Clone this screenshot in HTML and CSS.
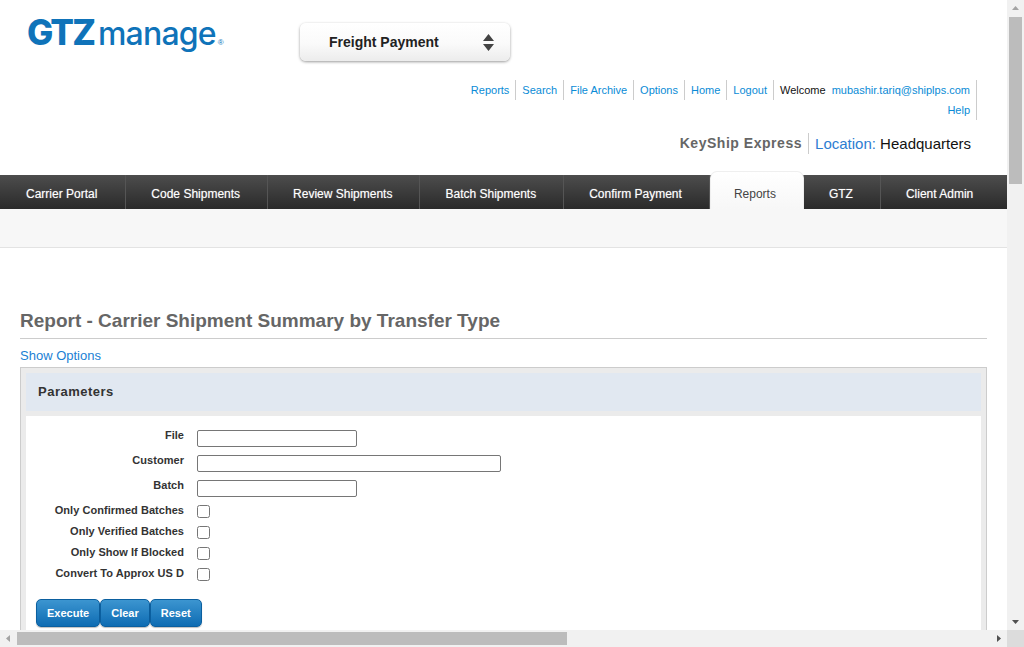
FILE: index.html
```html
<!DOCTYPE html>
<html>
<head>
	<meta charset="UTF-8">
	<title>Report - Carrier Shipment Summary by Transfer Type</title>
	<link rel="stylesheet" href="styles.css">
</head>
<body>
	<div class="window">
		<div class="viewport">
			<div class="page">
				<div class="header">
					<div class="brand-row">
						<a class="logo" href="#"><span class="logo-gtz">GTZ</span><span class="logo-manage">manage</span><span class="logo-reg">®</span></a>
						<a class="app-select" href="#">
							<span>Freight Payment</span>
							<svg class="updown" width="11" height="17" viewBox="0 0 11 17"><path d="M5.500 0 11 7H0zM0 10h11l-5.500 7z" fill="#444"/></svg>
						</a>
					</div>
					<ul class="toplinks">
						<li><a href="#">Reports</a></li>
						<li><a href="#">Search</a></li>
						<li><a href="#">File Archive</a></li>
						<li><a href="#">Options</a></li>
						<li><a href="#">Home</a></li>
						<li><a href="#">Logout</a></li>
						<li><span class="welcome">Welcome</span><a href="#">mubashir.tariq@shiplps.com</a></li>
						<li><a href="#">Help</a></li>
					</ul>
					<div class="company">
						<span class="company-name">KeyShip Express</span>
						<span class="location"><a href="#">Location:</a> <span class="location-name">Headquarters</span></span>
					</div>
				</div>

				<ul class="nav">
					<li><a href="#">Carrier Portal</a></li>
					<li><a href="#">Code Shipments</a></li>
					<li><a href="#">Review Shipments</a></li>
					<li><a href="#">Batch Shipments</a></li>
					<li><a href="#">Confirm Payment</a></li>
					<li class="active"><a href="#">Reports</a></li>
					<li><a href="#">GTZ</a></li>
					<li><a href="#">Client Admin</a></li>
				</ul>
				<div class="subnav"></div>

				<div class="content">
					<h1>Report - Carrier Shipment Summary by Transfer Type</h1>
					<a class="show-options" href="#">Show Options</a>
					<div class="panel">
						<div class="panel-title">Parameters</div>
						<div class="panel-body">
							<div class="form">
								<label>File</label><input class="short" type="text">
								<label>Customer</label><input class="long" type="text">
								<label>Batch</label><input class="short" type="text">
								<label>Only Confirmed Batches</label><input type="checkbox">
								<label>Only Verified Batches</label><input type="checkbox">
								<label>Only Show If Blocked</label><input type="checkbox">
								<label>Convert To Approx US D</label><input type="checkbox">
							</div>
							<div class="buttons">
								<a class="btn" href="#">Execute</a><a class="btn" href="#">Clear</a><a class="btn" href="#">Reset</a>
							</div>
						</div>
					</div>
				</div>
			</div>
			<div class="vbar">
				<svg class="arrow" width="17" height="17" viewBox="0 0 17 17"><path d="M8.500 6 12 10H5z" fill="#a3a3a3"/></svg>
				<div class="vthumb"></div>
				<svg class="arrow arrow-end" width="17" height="17" viewBox="0 0 17 17"><path d="M5 7h7l-3.500 4z" fill="#505050"/></svg>
			</div>
		</div>
		<div class="hbar">
			<svg class="arrow" width="17" height="17" viewBox="0 0 17 17"><path d="M6 8.500 10 5v7z" fill="#a3a3a3"/></svg>
			<div class="hthumb"></div>
			<svg class="arrow arrow-end" width="17" height="17" viewBox="0 0 17 17"><path d="M7 5l4 3.500L7 12z" fill="#505050"/></svg>
			<div class="corner"></div>
		</div>
	</div>
</body>
</html>
```

FILE: styles.css
```css
html, body {
	margin: 0;
	padding: 0;
	background: #fff;
	overflow: hidden;
}
body {
	font-family: "Liberation Sans", Arial, sans-serif;
	font-size: 12px;
	color: #333;
}
a {
	text-decoration: none;
}
ul {
	margin: 0;
	padding: 0;
	list-style: none;
}

.window {
	display: flex;
	flex-direction: column;
	width: 1024px;
	height: 647px;
	overflow: hidden;
}
.viewport {
	display: flex;
	height: 630px;
}
.page {
	width: 1007px;
	overflow: hidden;
}

/* header */
.header {
	height: 175px;
	overflow: hidden;
}
.brand-row {
	display: flex;
	height: 80px;
}
.logo {
	display: flex;
	align-items: baseline;
	width: 273px;
	height: 50px;
	margin: 10px 0 0 27px;
	color: #0f73b9;
}
.logo-gtz {
	font-family: Inter, sans-serif;
	font-size: 35px;
	font-weight: 800;
	letter-spacing: -1.900px;
	line-height: 45px;
}
.logo-manage {
	margin-left: 4px;
	font-family: Inter, sans-serif;
	font-size: 32px;
	font-weight: 500;
	letter-spacing: -0.800px;
}
.logo-reg {
	margin-left: 2px;
	font-size: 8px;
}
.app-select {
	display: flex;
	align-items: center;
	justify-content: space-between;
	box-sizing: border-box;
	width: 210px;
	height: 38px;
	margin-top: 23px;
	padding: 0 16px 0 29px;
	border-radius: 6px;
	background: linear-gradient(#fff, #fafafa 55%, #ececec);
	box-shadow: 0 1px 3px rgba(0, 0, 0, 0.4);
	color: #222;
	font-size: 14px;
	font-weight: bold;
}
.toplinks {
	display: flex;
	flex-wrap: wrap;
	justify-content: flex-end;
	width: 520px;
	margin-left: 457px;
	font-size: 11px;
}
.toplinks li {
	height: 20px;
	padding: 0 6px;
	border-right: 1px solid #ccc;
	line-height: 20px;
}
.toplinks a {
	color: #0a8bd6;
}
.welcome {
	margin-right: 6px;
	color: #111;
}
.company {
	display: flex;
	justify-content: flex-end;
	align-items: center;
	height: 21px;
	margin: 13px 36px 0 0;
}
.company-name {
	padding-right: 6px;
	border-right: 1px solid #ccc;
	color: #666;
	font-size: 14px;
	font-weight: bold;
	line-height: 21px;
	letter-spacing: 0.530px;
}
.location {
	padding-left: 6px;
	font-size: 15px;
}
.location a {
	color: #2d7dd2;
}
.location-name {
	color: #111;
}

/* main nav */
.nav {
	display: flex;
	height: 34px;
	background: linear-gradient(#4d4d4d, #2a2a2a);
}
.nav li {
	border-right: 1px solid #555;
}
.nav li:last-child {
	flex: 1;
	border-right: 0;
}
.nav a {
	display: block;
	padding: 0 27px 0 25px;
	color: #fff;
	font-size: 12px;
	line-height: 38px;
	text-shadow: 0 0 1px rgba(255, 255, 255, 0.5);
}
.nav li:first-child a {
	padding: 0 28px 0 26px;
}
.nav .active {
	box-sizing: border-box;
	height: 38px;
	margin-top: -4px;
	border: 1px solid #efefef;
	border-bottom: 0;
	border-radius: 7px 7px 0 0;
	background: linear-gradient(#fff, #f7f7f7);
}
.nav .active a {
	padding: 0 27px 0 23px;
	color: #444;
	line-height: 44px;
	text-shadow: none;
}
.subnav {
	height: 38px;
	border-bottom: 1px solid #e3e3e3;
	background: #f7f7f7;
}

/* report */
.content {
	padding: 0 20px;
}
h1 {
	margin: 61px 0 0;
	padding-bottom: 5px;
	border-bottom: 1px solid #ccc;
	color: #666;
	font-size: 19px;
	font-weight: bold;
	line-height: 24px;
}
.show-options {
	display: block;
	height: 28px;
	color: #1a7fd4;
	font-size: 13px;
	line-height: 33px;
}
.panel {
	padding: 5px 5px 0;
	border: 1px solid #ccc;
	border-bottom: 0;
	background: #ebebeb;
}
.panel-title {
	height: 38px;
	padding-left: 12px;
	background: #e1e8f1;
	color: #333;
	font-size: 13px;
	font-weight: bold;
	line-height: 38px;
	letter-spacing: 0.500px;
}
.panel-body {
	margin-top: 5px;
	padding: 14px 10px 20px;
	background: #fff;
}
.form {
	display: grid;
	grid-template-columns: 148px auto;
	column-gap: 13px;
	justify-content: start;
	align-items: start;
}
.form label {
	margin-top: -1px;
	color: #333;
	font-size: 11px;
	font-weight: bold;
	line-height: 13px;
	text-align: right;
	letter-spacing: 0.040px;
}
.form input[type="text"] {
	box-sizing: border-box;
	height: 17px;
	margin: 0 0 8px;
	padding: 0 2px;
	border: 1px solid #767676;
	border-radius: 2px;
}
.form .short {
	width: 160px;
}
.form .long {
	width: 304px;
}
.form input[type="checkbox"] {
	width: 13px;
	height: 13px;
	margin: 0 0 8px;
}
.buttons {
	display: flex;
	margin-top: 10px;
}
.btn {
	box-sizing: border-box;
	height: 28px;
	padding: 0 10px;
	border: 1px solid #0b5f9f;
	border-radius: 5px;
	background: linear-gradient(#3c95d0, #0e6cb3);
	box-shadow: 0 1px 1px rgba(0, 0, 0, 0.25);
	color: #fff;
	font-size: 11px;
	font-weight: bold;
	line-height: 26px;
}

/* scrollbars */
.vbar {
	display: flex;
	flex-direction: column;
	width: 17px;
	background: #f1f1f1;
}
.vthumb {
	height: 167px;
	margin: 0 2px;
	background: #bcbcbc;
}
.arrow {
	display: block;
	flex: none;
}
.vbar .arrow-end {
	margin-top: auto;
}
.hbar {
	display: flex;
	height: 17px;
	background: #f1f1f1;
}
.hthumb {
	width: 550px;
	margin: 2px 0;
	background: #bcbcbc;
}
.hbar .arrow-end {
	margin-left: auto;
}
.corner {
	width: 17px;
	background: #dcdcdc;
}
```
